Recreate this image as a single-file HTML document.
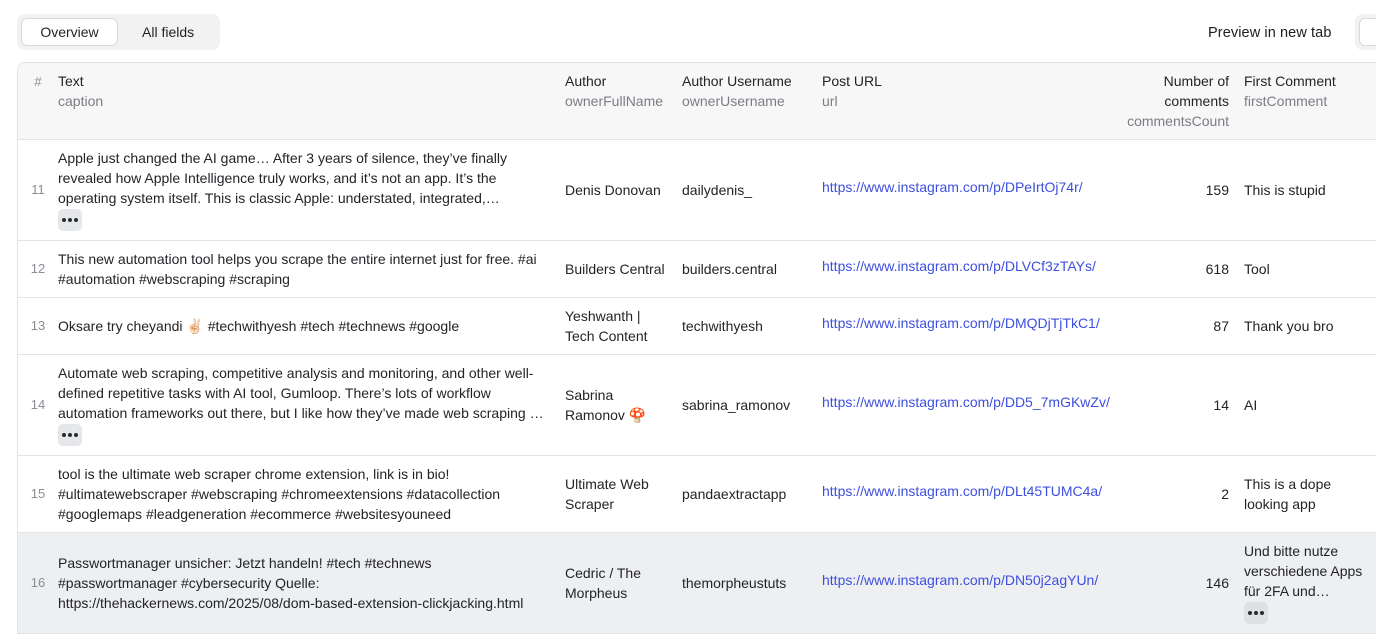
<!DOCTYPE html>
<html><head><meta charset="utf-8"><style>
*{margin:0;padding:0;box-sizing:border-box}
html,body{width:1376px;height:634px;overflow:hidden}
body{background:#fff;font-family:"Liberation Sans",Arial,sans-serif;font-size:14px;color:#232428;position:relative}
.tabs{position:absolute;left:17px;top:14px;width:203px;height:36px;background:#f2f2f3;border-radius:8px}
.tab1{position:absolute;left:4px;top:4px;width:97px;height:28px;background:#fff;border:1px solid #d8d9dc;border-radius:6px;text-align:center;line-height:26px}
.tab2{position:absolute;left:125px;top:4px;line-height:28px}
.prev{position:absolute;left:1208px;top:25px;font-size:14.5px;color:#1c1d20;letter-spacing:.1px}
.rbtn{position:absolute;left:1355px;top:14px;width:40px;height:36px;background:#f2f2f3;border-radius:8px}
.rbtn div{position:absolute;left:4px;top:4px;width:40px;height:28px;background:#fff;border:1px solid #d8d9dc;border-radius:6px}
.tbl{position:absolute;left:17px;top:62px;width:1380px;height:572px;border:1px solid #e1e2e5;border-bottom:none;border-radius:8px 0 0 0;overflow:hidden}
.row{position:absolute;left:0;width:1380px;border-bottom:1px solid #e3e4e7;white-space:nowrap;line-height:20px}
.hd{background:#f7f7f8}
.c{position:absolute}
.g{color:#7a7d85}
.num{color:#8a8d94;font-size:13px;width:40px;text-align:center;left:0}
a{color:#3d4fe0;text-decoration:none}
.r{text-align:right}
.dots{display:inline-block;vertical-align:top;width:24px;height:22px;background:#e6e7ea;border-radius:5px;position:relative;margin-top:1px}
.dots i{position:absolute;top:9px;width:4px;height:4px;border-radius:50%;background:#2a2b2f}
</style></head><body>
<div class="tabs"><div class="tab1">Overview</div><div class="tab2">All fields</div></div>
<div class="prev">Preview in new tab</div>
<div class="rbtn"><div></div></div>
<div class="tbl">
<div class="row hd" style="top:0;height:77px">
 <div class="c num" style="top:9px">#</div>
 <div class="c" style="left:40px;top:8px">Text<br><span class="g">caption</span></div>
 <div class="c" style="left:547px;top:8px">Author<br><span class="g">ownerFullName</span></div>
 <div class="c" style="left:664px;top:8px">Author Username<br><span class="g">ownerUsername</span></div>
 <div class="c" style="left:804px;top:8px">Post URL<br><span class="g">url</span></div>
 <div class="c r" style="right:169px;top:8px">Number of<br>comments<br><span class="g">commentsCount</span></div>
 <div class="c" style="left:1226px;top:8px">First Comment<br><span class="g">firstComment</span></div>
</div>
<div class="row" style="top:77px;height:101px">
 <div class="c num" style="top:40px">11</div>
 <div class="c" style="left:40px;top:8px">Apple just changed the AI game… After 3 years of silence, they’ve finally<br>revealed how Apple Intelligence truly works, and it’s not an app. It’s the<br>operating system itself. This is classic Apple: understated, integrated,…<br><span class="dots"><i style="left:4px"></i><i style="left:10px"></i><i style="left:16px"></i></span></div>
 <div class="c" style="left:547px;top:40px">Denis Donovan</div>
 <div class="c" style="left:664px;top:40px">dailydenis_</div>
 <div class="c" style="left:804px;top:37px"><a>https://www.instagram.com/p/DPeIrtOj74r/</a></div>
 <div class="c r" style="right:169px;top:40px">159</div>
 <div class="c" style="left:1226px;top:40px">This is stupid</div>
</div>
<div class="row" style="top:178px;height:57px">
 <div class="c num" style="top:18px">12</div>
 <div class="c" style="left:40px;top:8px">This new automation tool helps you scrape the entire internet just for free. #ai<br>#automation #webscraping #scraping</div>
 <div class="c" style="left:547px;top:18px">Builders Central</div>
 <div class="c" style="left:664px;top:18px">builders.central</div>
 <div class="c" style="left:804px;top:15px"><a>https://www.instagram.com/p/DLVCf3zTAYs/</a></div>
 <div class="c r" style="right:169px;top:18px">618</div>
 <div class="c" style="left:1226px;top:18px">Tool</div>
</div>
<div class="row" style="top:235px;height:57px">
 <div class="c num" style="top:18px">13</div>
 <div class="c" style="left:40px;top:18px">Oksare try cheyandi ✌🏻 #techwithyesh #tech #technews #google</div>
 <div class="c" style="left:547px;top:8px">Yeshwanth |<br>Tech Content</div>
 <div class="c" style="left:664px;top:18px">techwithyesh</div>
 <div class="c" style="left:804px;top:15px"><a>https://www.instagram.com/p/DMQDjTjTkC1/</a></div>
 <div class="c r" style="right:169px;top:18px">87</div>
 <div class="c" style="left:1226px;top:18px">Thank you bro</div>
</div>
<div class="row" style="top:292px;height:101px">
 <div class="c num" style="top:40px">14</div>
 <div class="c" style="left:40px;top:8px">Automate web scraping, competitive analysis and monitoring, and other well-<br>defined repetitive tasks with AI tool, Gumloop. There’s lots of workflow<br>automation frameworks out there, but I like how they’ve made web scraping …<br><span class="dots"><i style="left:4px"></i><i style="left:10px"></i><i style="left:16px"></i></span></div>
 <div class="c" style="left:547px;top:30px">Sabrina<br>Ramonov 🍄</div>
 <div class="c" style="left:664px;top:40px">sabrina_ramonov</div>
 <div class="c" style="left:804px;top:37px"><a>https://www.instagram.com/p/DD5_7mGKwZv/</a></div>
 <div class="c r" style="right:169px;top:40px">14</div>
 <div class="c" style="left:1226px;top:40px">AI</div>
</div>
<div class="row" style="top:393px;height:77px">
 <div class="c num" style="top:28px">15</div>
 <div class="c" style="left:40px;top:8px">tool is the ultimate web scraper chrome extension, link is in bio!<br>#ultimatewebscraper #webscraping #chromeextensions #datacollection<br>#googlemaps #leadgeneration #ecommerce #websitesyouneed</div>
 <div class="c" style="left:547px;top:18px">Ultimate Web<br>Scraper</div>
 <div class="c" style="left:664px;top:28px">pandaextractapp</div>
 <div class="c" style="left:804px;top:25px"><a>https://www.instagram.com/p/DLt45TUMC4a/</a></div>
 <div class="c r" style="right:169px;top:28px">2</div>
 <div class="c" style="left:1226px;top:18px">This is a dope<br>looking app</div>
</div>
<div class="row" style="top:470px;height:101px;background:#eeeff1">
 <div class="c num" style="top:40px">16</div>
 <div class="c" style="left:40px;top:20px">Passwortmanager unsicher: Jetzt handeln! #tech #technews<br>#passwortmanager #cybersecurity Quelle:<br>https://thehackernews.com/2025/08/dom-based-extension-clickjacking.html</div>
 <div class="c" style="left:547px;top:30px">Cedric / The<br>Morpheus</div>
 <div class="c" style="left:664px;top:40px">themorpheustuts</div>
 <div class="c" style="left:804px;top:37px"><a>https://www.instagram.com/p/DN50j2agYUn/</a></div>
 <div class="c r" style="right:169px;top:40px">146</div>
 <div class="c" style="left:1226px;top:8px">Und bitte nutze<br>verschiedene Apps<br>für 2FA und…<br><span class="dots" style="background:#dfe0e3"><i style="left:4px"></i><i style="left:10px"></i><i style="left:16px"></i></span></div>
</div>
</div>
</body></html>
